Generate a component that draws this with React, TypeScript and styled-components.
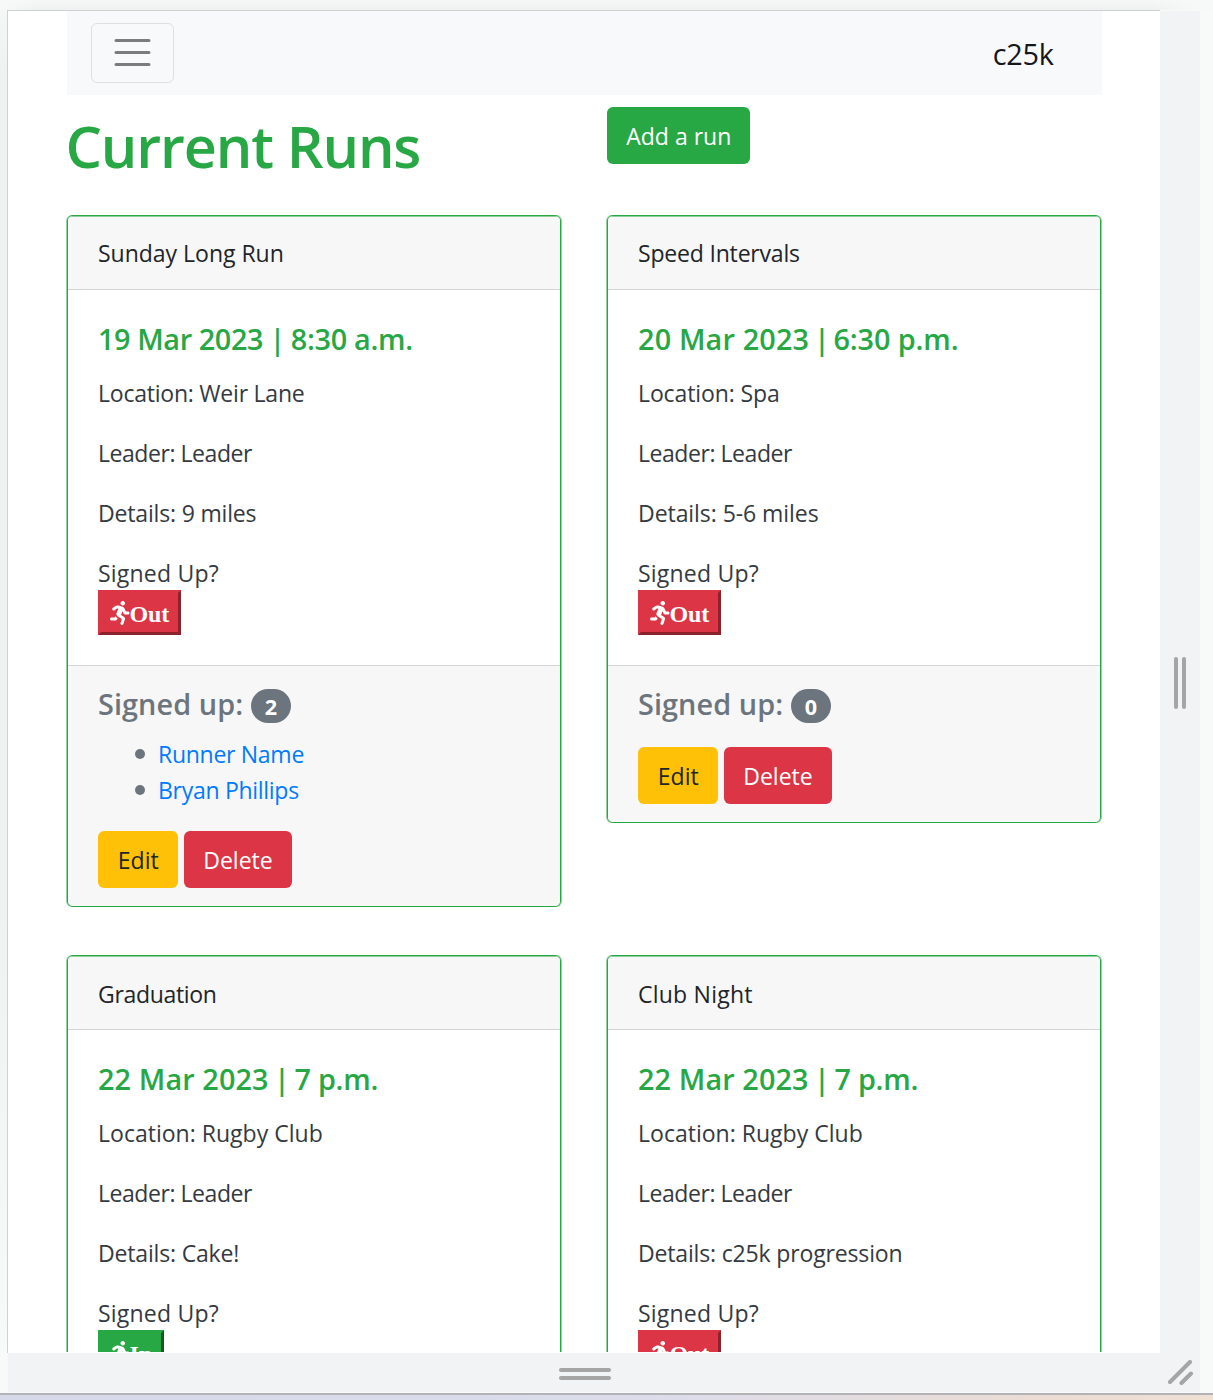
import React from "react";
import styled, { createGlobalStyle } from "styled-components";
import { FaRunning } from "react-icons/fa";

const green = "#28a745";
const greenSoft = "rgba(40, 167, 69, 0.5)";
const red = "#dc3545";
const yellow = "#ffc107";

const GlobalStyle = createGlobalStyle`
  *, *::before, *::after { box-sizing: border-box; }
  body { margin: 0; overflow: hidden; font-family: "Open Sans", "Noto Sans", sans-serif; }
`;

const Desktop = styled.div`
  display: flex;
  flex-direction: column;
  width: 1213px;
  height: 1400px;
  padding-top: 10px;
  background:
    linear-gradient(to right, #f7f9f8, transparent 40px, transparent 1150px, #f7f9f8 1200px) 0 0 / 1213px 10px no-repeat,
    linear-gradient(to bottom, #f6f8f7, #eff1f0) 0 0 / 1213px 10px no-repeat,
    linear-gradient(to bottom, #f5f7f6, #f0f2f1 60px, #f0f2f1 900px, #f8faf9 1340px) 0 10px / 7px 1343px no-repeat,
    #f8faf9;
`;

const Main = styled.div`
  display: flex;
  height: 1343px;
  padding-left: 7px;
`;

const Device = styled.div`
  width: 1153px;
  height: 1343px;
  background: #fff;
  border: solid #cfd0d0;
  border-width: 1px 0 0 1px;
`;

const Page = styled.main`
  width: 1094px;
  height: 1341px;
  padding-left: 58.5px;
  overflow: hidden;
`;

const SideRail = styled.div`
  display: flex;
  align-items: center;
  justify-content: center;
  gap: 4px;
  width: 40px;
  height: 1342px;
  margin-top: 1px;
  padding-top: 2px;
  background: #f1f3f4;
`;

const BottomRail = styled.div`
  display: flex;
  align-items: center;
  justify-content: space-between;
  width: 1192px;
  height: 39px;
  margin-left: 8px;
  padding: 3px 6px 0 551px;
  background: #f1f3f4;
`;

const Bars = styled.div`
  display: flex;
  flex-direction: column;
  gap: 4px;
`;

const Grip = styled.div<{ $w: number; $h: number }>`
  width: ${(p) => p.$w}px;
  height: ${(p) => p.$h}px;
  border-radius: 2px;
  background: #a5a5a5;
`;

const Corner = styled.svg`
  width: 28px;
  height: 28px;
`;

const Taskbar = styled.div`
  height: 7px;
  margin-top: 1px;
  border-top: 2px solid #b3b3b7;
  background: linear-gradient(to right, #d6d9ea, #dcdcea 55%, #ecdcd2 88%, #f0dfd3);
`;

const Text = styled.span<{ $ls?: number }>`
  letter-spacing: ${(p) => p.$ls ?? 0}px;
  white-space: pre;
`;

const Navbar = styled.nav`
  display: flex;
  align-items: flex-start;
  justify-content: space-between;
  height: 84px;
  padding: 12px 48.5px 0 24.5px;
  background: #f8f9fb;
`;

const Toggler = styled.button`
  display: flex;
  align-items: center;
  justify-content: center;
  width: 83px;
  height: 60px;
  padding: 0 0 1px;
  border: 1px solid #dfe0e2;
  border-radius: 6px;
  background: transparent;
`;

const Brand = styled.a`
  padding-top: 13px;
  color: #15171a;
  font-size: 28.8px;
  line-height: 36px;
`;

const Row = styled.div`
  display: flex;
  align-items: flex-start;
`;

const TitleRow = styled(Row)`
  height: 120px;
  padding-top: 12px;
`;

const Title = styled.h1`
  width: 541px;
  margin: 3px 0 0 -1px;
  color: ${green};
  font-size: 57.6px;
  font-weight: 600;
  line-height: 72px;
`;

const variants = {
  success: { bg: green, fg: "#fff" },
  warning: { bg: yellow, fg: "#212529" },
  danger: { bg: red, fg: "#fff" },
};

const Button = styled.button<{ $variant: keyof typeof variants; $w: number }>`
  display: flex;
  justify-content: center;
  width: ${(p) => p.$w}px;
  height: 57px;
  padding: 11px 0 0 1px;
  border: 0;
  border-radius: 6px;
  background: ${(p) => variants[p.$variant].bg};
  color: ${(p) => variants[p.$variant].fg};
  font-family: inherit;
  font-size: 23.04px;
  line-height: 36px;
`;

const CardRow = styled(Row)`
  gap: 46px;
  padding-left: 0.5px;
  margin-bottom: 48px;
`;

const Card = styled.article`
  width: 494px;
  border: 1px solid ${green};
  border-radius: 6px;
  background: #fff;
  box-shadow: -1px 0 0 ${greenSoft}, 1px 0 0 ${greenSoft};
  overflow: hidden;
  font-size: 23.04px;
  line-height: 36px;
`;

const CardHeader = styled.header<{ $top: number }>`
  height: 74px;
  padding: ${(p) => p.$top}px 30px 0;
  border-bottom: 1px solid #d5d5d5;
  background: #f7f7f7;
  box-shadow: inset 0 1px 0 ${greenSoft};
  color: #212529;
`;

const CardBody = styled.div`
  height: 375px;
  padding: 31px 30px 0;
  color: #343a40;
`;

const When = styled.h5`
  height: 36px;
  margin: 0 0 18px;
  color: ${green};
  font-size: 28.8px;
  font-weight: 600;
  line-height: 36px;
`;

const Divider = styled.span<{ $left: number; $right: number }>`
  margin: 0 ${(p) => p.$right}px 0 ${(p) => p.$left}px;
  white-space: pre;
`;

const Line = styled.p`
  height: 36px;
  margin: 0 0 24px;
`;

const Question = styled(Line)`
  margin-bottom: -1px;
`;

const Toggle = styled.button<{ $in?: boolean }>`
  display: flex;
  align-items: center;
  height: 45px;
  padding: 0 9px;
  border: 3px solid;
  border-color: ${(p) => (p.$in ? `${green} #14582a #14582a ${green}` : `${red} #8c222c #8c222c ${red}`)};
  background: ${(p) => (p.$in ? green : red)};
  color: #fff;
  font: bold 24px/27px "Liberation Serif", serif;
`;

const ToggleLabel = styled.span`
  padding-top: 4px;
  letter-spacing: -0.1px;
`;

const CardFooter = styled.footer`
  padding: 19px 30px 18px;
  border-top: 1px solid #d5d5d5;
  background: #f7f7f7;
`;

const CountLine = styled.h5`
  display: flex;
  height: 36px;
  margin: 0;
  padding-top: 1px;
  color: #6c757d;
  font-size: 28.8px;
  font-weight: 600;
  line-height: 36px;
`;

const CountLabel = styled(Text)`
  width: 153px;
`;

const Badge = styled.span`
  width: 40px;
  height: 34px;
  margin-top: 3px;
  border-radius: 17px;
  background: #6c757d;
  color: #fff;
  font-size: 21.6px;
  font-weight: 700;
  line-height: 35px;
  text-align: center;
`;

const Runners = styled.ul`
  margin: 14px 0 -2px;
  padding: 0 0 0 37px;
  list-style: none;
`;

const Runner = styled.li`
  display: flex;
  align-items: center;
  height: 36px;
  color: #007bff;

  &::before {
    content: "";
    width: 10px;
    height: 10px;
    margin: 2px 13px 0 0;
    border-radius: 5px;
    background: #6c757d;
  }
`;

const RunnerName = styled(Text)`
  padding-top: 2px;
`;

const Actions = styled.div`
  display: flex;
  gap: 6px;
  margin-top: 26px;
`;

type Label = [text: string, tracking: number];

interface Moment {
  date: Label;
  time: Label;
  divider: [left: number, right: number];
}

interface Run {
  title: Label;
  when: Moment;
  location: Label;
  details: Label;
  signedIn?: boolean;
  runners: Label[];
}

const graduationDay: Moment = {
  date: ["22 Mar 2023", 0.11],
  time: ["7 p.m.", -0.24],
  divider: [-2.2, -2.8],
};

const rows: Run[][] = [
  [
    {
      title: ["Sunday Long Run", -0.03],
      when: { date: ["19 Mar 2023", -0.4], time: ["8:30 a.m.", -0.3], divider: [-1, -2] },
      location: ["Location: Weir Lane", -0.24],
      details: ["Details: 9 miles", -0.18],
      runners: [["Runner Name", -0.3], ["Bryan Phillips", -0.3]],
    },
    {
      title: ["Speed Intervals", -0.2],
      when: { date: ["20 Mar 2023", 0.16], time: ["6:30 p.m.", -0.1], divider: [-2.6, -4] },
      location: ["Location: Spa", -0.13],
      details: ["Details: 5-6 miles", -0.07],
      runners: [],
    },
  ],
  [
    {
      title: ["Graduation", -0.34],
      when: graduationDay,
      location: ["Location: Rugby Club", 0],
      details: ["Details: Cake!", -0.18],
      signedIn: true,
      runners: [],
    },
    {
      title: ["Club Night", 0.22],
      when: graduationDay,
      location: ["Location: Rugby Club", 0],
      details: ["Details: c25k progression", -0.17],
      runners: [],
    },
  ],
];

const Tracked = ({ label: [text, tracking] }: { label: Label }) => <Text $ls={tracking}>{text}</Text>;

function RunCard({ run, headerTop }: { run: Run; headerTop: number }) {
  const [left, right] = run.when.divider;
  return (
    <Card>
      <CardHeader $top={headerTop}>
        <Tracked label={run.title} />
      </CardHeader>
      <CardBody>
        <When>
          <Tracked label={run.when.date} />
          <Divider $left={left} $right={right}>{" | "}</Divider>
          <Tracked label={run.when.time} />
        </When>
        <Line><Tracked label={run.location} /></Line>
        <Line><Text $ls={-0.46}>Leader: Leader</Text></Line>
        <Line><Tracked label={run.details} /></Line>
        <Question><Text $ls={0.2}>Signed Up?</Text></Question>
        <Toggle $in={run.signedIn}>
          <FaRunning size={24} style={{ width: 19.5 }} />
          <ToggleLabel>{run.signedIn ? "In" : "Out"}</ToggleLabel>
        </Toggle>
      </CardBody>
      <CardFooter>
        <CountLine>
          <CountLabel $ls={0.1}>Signed up:</CountLabel>
          <Badge>{run.runners.length}</Badge>
        </CountLine>
        {run.runners.length > 0 && (
          <Runners>
            {run.runners.map(([name, tracking]) => (
              <Runner key={name}><RunnerName $ls={tracking}>{name}</RunnerName></Runner>
            ))}
          </Runners>
        )}
        <Actions>
          <Button $variant="warning" $w={79.5}><Text>Edit</Text></Button>
          <Button $variant="danger" $w={108}><Text>Delete</Text></Button>
        </Actions>
      </CardFooter>
    </Card>
  );
}

export default function App() {
  return (
    <>
      <GlobalStyle />
      <Desktop>
        <Main>
          <Device>
            <Page>
              <Navbar>
                <Toggler aria-label="Toggle navigation">
                  <svg width="45" height="45" viewBox="0 0 30 30">
                    <path d="M4 7h22M4 15h22M4 23h22" stroke="rgba(0,0,0,0.5)" strokeWidth="2" strokeLinecap="round" />
                  </svg>
                </Toggler>
                <Brand><Text $ls={-0.3}>c25k</Text></Brand>
              </Navbar>
              <TitleRow>
                <Title><Text $ls={-1.13}>Current Runs</Text></Title>
                <Button $variant="success" $w={143.5}><Text>Add a run</Text></Button>
              </TitleRow>
              {rows.map((row, i) => (
                <CardRow key={i}>
                  {row.map((run) => (
                    <RunCard key={run.title[0]} run={run} headerTop={18 + i + 1} />
                  ))}
                </CardRow>
              ))}
            </Page>
          </Device>
          <SideRail>
            <Grip $w={4} $h={52} />
            <Grip $w={4} $h={52} />
          </SideRail>
        </Main>
        <BottomRail>
          <Bars>
            <Grip $w={52} $h={4} />
            <Grip $w={52} $h={4} />
          </Bars>
          <Corner viewBox="0 0 28 28">
            <path d="M4 22 24 2M15.5 23 25 13.5" stroke="#a5a5a5" strokeWidth="4" strokeLinecap="round" />
          </Corner>
        </BottomRail>
        <Taskbar />
      </Desktop>
    </>
  );
}
